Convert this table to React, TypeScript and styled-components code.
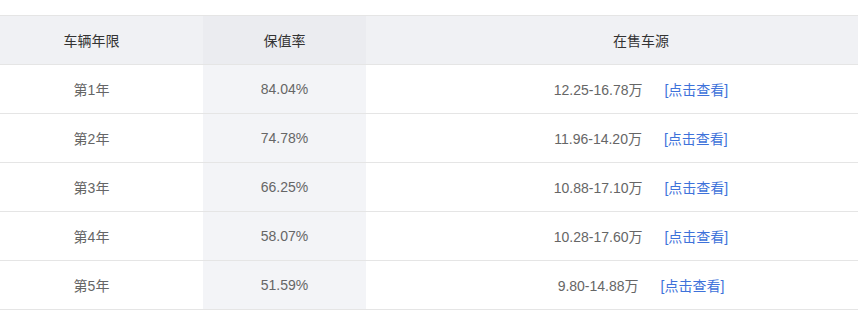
import React from 'react'
import styled, { createGlobalStyle } from 'styled-components'

const GlobalStyle = createGlobalStyle`
  html, body {
    margin: 0;
    padding: 0;
    background: #fff;
  }
  body {
    font-family: "Liberation Sans", Arial, "Noto Sans CJK SC", sans-serif;
    font-size: 14px;
    color: #666;
  }
`;

interface YearRow {
    year: string;
    rate: string;
    price: string;
}

const rows: YearRow[] = [
    { year: '第1年', rate: '84.04%', price: '12.25-16.78万' },
    { year: '第2年', rate: '74.78%', price: '11.96-14.20万' },
    { year: '第3年', rate: '66.25%', price: '10.88-17.10万' },
    { year: '第4年', rate: '58.07%', price: '10.28-17.60万' },
    { year: '第5年', rate: '51.59%', price: '9.80-14.88万' },
]

function App() {
    return (
    <Page>
        <GlobalStyle />
        <Table>
            <colgroup>
                <col style={{ width: 223 }} />
                <col style={{ width: 163 }} />
                <col />
            </colgroup>
            <thead>
                <tr>
                    <Th>车辆年限</Th>
                    <Th $active>保值率</Th>
                    <Th>在售车源</Th>
                </tr>
            </thead>
            <tbody>
                {rows.map((r) => (
                    <tr key={r.year}>
                        <Td>{r.year}</Td>
                        <Td $active>{r.rate}</Td>
                        <Td>
                            <Price>{r.price}</Price>
                            <Link href="#">[点击查看]</Link>
                        </Td>
                    </tr>
                ))}
            </tbody>
        </Table>
    </Page>
  )
}

export default App

const Page = styled.div`
  width: 858px;
  height: 324px;
  overflow: hidden;
  padding-top: 15px;
  box-sizing: border-box;
`;

const Table = styled.table`
  width: 936px;
  margin-left: -20px;
  border-collapse: collapse;
  table-layout: fixed;
  border-top: 1px solid #e5e5e5;
`;

const Th = styled.th<{ $active?: boolean }>`
  height: 48px;
  padding: 0;
  font-weight: normal;
  color: #333;
  text-align: center;
  background: ${(p) => (p.$active ? '#ebecf0' : '#f0f1f4')};
  border-bottom: 1px solid #e5e5e5;
`;

const Td = styled.td<{ $active?: boolean }>`
  height: 48px;
  padding: 0;
  text-align: center;
  color: #666;
  background: ${(p) => (p.$active ? '#f3f4f7' : '#fff')};
  border-bottom: 1px solid #e5e5e5;
`;

const Price = styled.span`
  color: #666;
`;

const Link = styled.a`
  margin-left: 22px;
  color: #3e72da;
  text-decoration: none;
`;
